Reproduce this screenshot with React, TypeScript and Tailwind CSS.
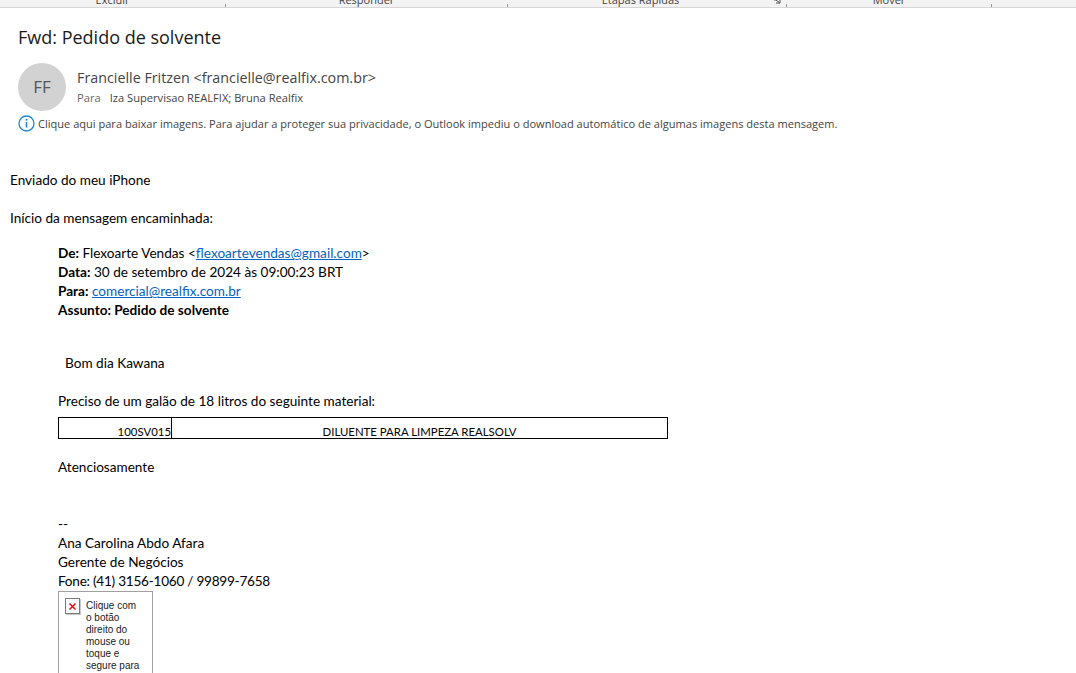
const segoe = "font-['Open_Sans','Noto_Sans',sans-serif]";

function BrokenImage() {
  return (
    <div className="w-[95px] h-[90px] border border-[#a0a0a0] border-b-0 flex gap-[6px] pl-[6px] pt-[6px] overflow-hidden">
      <div className="w-[15px] h-[16px] shrink-0 border border-[#7a7a7a] shadow-[1px_1px_0_#c8c8c8] flex items-center justify-center">
        <svg width="9" height="9" viewBox="0 0 9 9">
          <path d="M1.5 1.5l6 6M7.5 1.5l-6 6" stroke="#e8101a" strokeWidth="1.6" fill="none" />
        </svg>
      </div>
      <p className="font-['Liberation_Sans',sans-serif] text-[10px] leading-[12px] text-[#222] w-[58px] pt-[2px]">
        Clique com o botão direito do mouse ou toque e segure para
      </p>
    </div>
  );
}

function RibbonLabel({ width, label }: { width: string; label: string }) {
  return <span className={`${width} text-center leading-[11px] -mt-[6px]`}>{label}</span>;
}

function RibbonSep() {
  return <span className="w-px h-[3px] bg-[#999] self-end" />;
}

export default function App() {
  return (
    <div className="w-[1076px] h-[673px] bg-white overflow-hidden font-['Lato','Liberation_Sans',sans-serif] text-[13.6px] text-black">
      {/* ribbon, only the group captions are left in view */}
      <div className={`h-[8px] bg-[#f3f3f3] border-b border-[#d6d6d6] overflow-hidden ${segoe} text-[11px] text-[#444]`}>
        <div className="flex h-[7px] items-start">
          <RibbonLabel width="w-[225px]" label="Excluir" />
          <RibbonSep />
          <RibbonLabel width="w-[281px]" label="Responder" />
          <RibbonSep />
          <RibbonLabel width="w-[265px]" label="Etapas Rápidas" />
          <svg width="9" height="4" viewBox="0 0 9 4" className="mr-[4px] shrink-0">
            <path d="M1 0h3M7 0v3H3M3 0l4 3" stroke="#555" fill="none" />
          </svg>
          <RibbonSep />
          <RibbonLabel width="w-[204px]" label="Mover" />
          <RibbonSep />
        </div>
      </div>

      <div className="pl-[18px] pt-[16px]">
        <h1 className={`${segoe} text-[18px] leading-[26px] text-[#1a1a1a]`}>Fwd: Pedido de solvente</h1>
        <div className="flex gap-[11px] mt-[13px]">
          <div className={`w-[48px] h-[48px] rounded-full bg-[#d2d2d2] flex items-center justify-center text-[#555] text-[17px] ${segoe}`}>
            FF
          </div>
          <div className={`${segoe} pt-[5px]`}>
            <div className="text-[14.3px] leading-[20px] text-[#444]">Francielle Fritzen &lt;francielle@realfix.com.br&gt;</div>
            <div className="text-[11.15px] leading-[18px] mt-[1px] text-[#444]">
              <span className="text-[#666] mr-[9px]">Para</span>Iza Supervisao REALFIX; Bruna Realfix
            </div>
          </div>
        </div>
        <div className={`flex items-center gap-[3px] mt-[4px] ${segoe} text-[11.05px] leading-[16px] text-[#444]`}>
          <svg width="17" height="17" viewBox="0 0 17 17">
            <circle cx="8.5" cy="8.5" r="7.5" fill="none" stroke="#1e88d2" strokeWidth="1.3" />
            <path d="M8.5 7v5.5" stroke="#1e88d2" strokeWidth="1.6" />
            <circle cx="8.5" cy="4.8" r="1" fill="#1e88d2" />
          </svg>
          <span>Clique aqui para baixar imagens. Para ajudar a proteger sua privacidade, o Outlook impediu o download automático de algumas imagens desta mensagem.</span>
        </div>
      </div>

      <div className="pl-[10px] pt-[39px] leading-[19px]">
        <p>Enviado do meu iPhone</p>
        <p className="mt-[19px]">Início da mensagem encaminhada:</p>
        <div className="pl-[48px] mt-[16px]">
          <p><b>De:</b> Flexoarte Vendas &lt;<a className="text-[#0563c1] underline">flexoartevendas@gmail.com</a>&gt;</p>
          <p><b>Data:</b> 30 de setembro de 2024 às 09:00:23 BRT</p>
          <p><b>Para:</b> <a className="text-[#0563c1] underline">comercial@realfix.com.br</a></p>
          <p><b>Assunto: Pedido de solvente</b></p>
          <p className="mt-[34px] pl-[7px]">Bom dia Kawana</p>
          <p className="mt-[19px]">Preciso de um galão de 18 litros do seguinte material:</p>
          <div className="flex w-[610px] h-[22px] border border-black mt-[6px] text-[11.4px] leading-[27px]">
            <div className="w-[113px] border-r border-black text-right">100SV015</div>
            <div className="flex-1 text-center">DILUENTE PARA LIMPEZA REALSOLV</div>
          </div>
          <p className="mt-[19px]">Atenciosamente</p>
          <p className="mt-[38px]">--</p>
          <p>Ana Carolina Abdo Afara</p>
          <p>Gerente de Negócios</p>
          <p className="tracking-[-0.25px]">Fone: (41) 3156-1060 / 99899-7658</p>
          <BrokenImage />
        </div>
      </div>
    </div>
  );
}
